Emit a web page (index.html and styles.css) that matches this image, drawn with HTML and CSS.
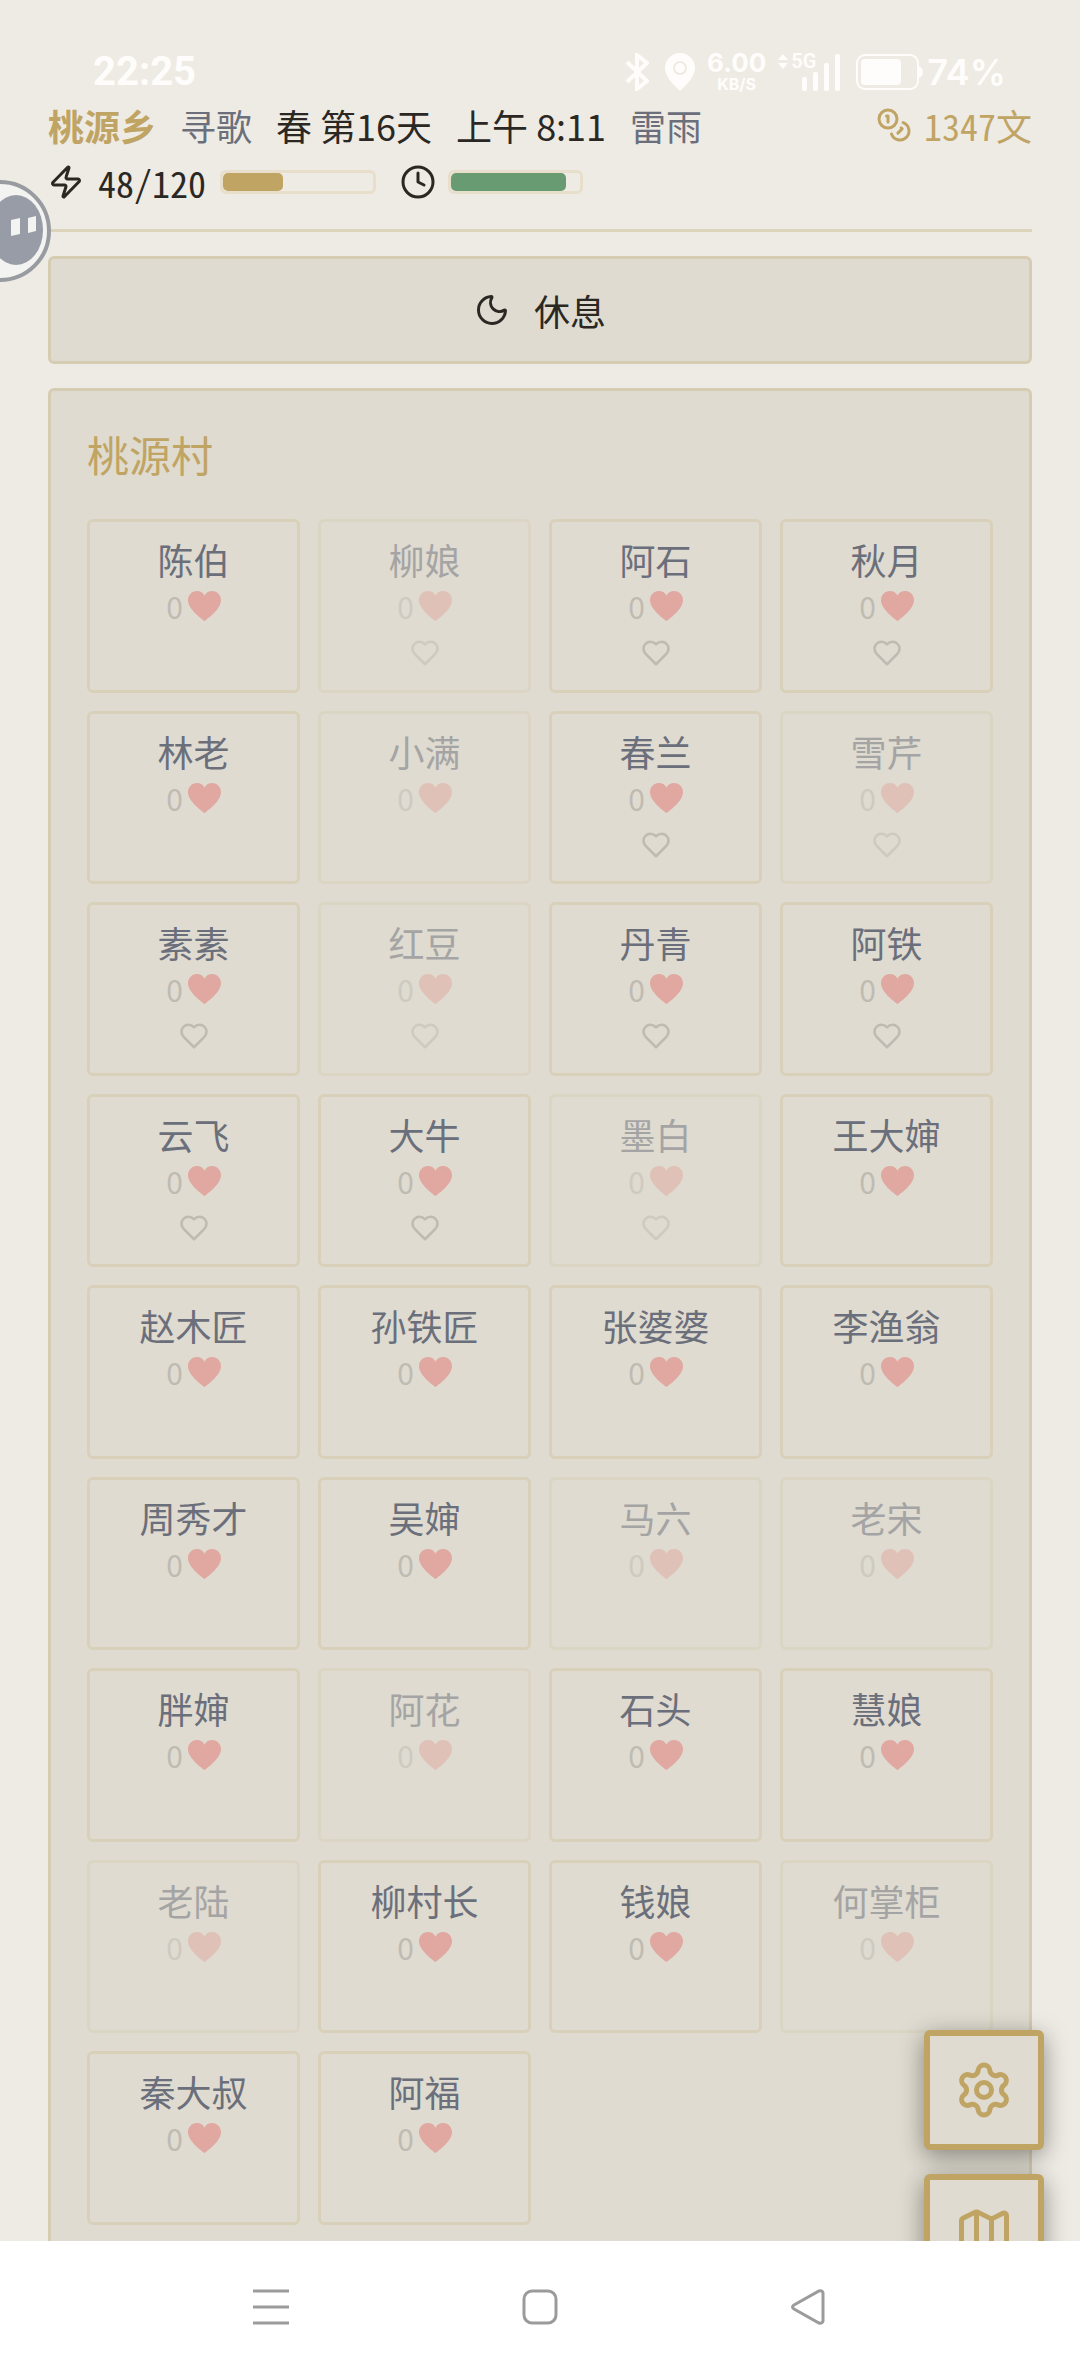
FILE: index.html
```
<!DOCTYPE html>
<html lang="zh-CN">
<head>
  <meta charset="UTF-8" />
  <title>桃源乡</title>
  <meta name="viewport" content="width=device-width, initial-scale=1.0" />
  <link rel="stylesheet" href="styles.css">
</head>
<body>

  <svg class="sprite" aria-hidden="true">
    <symbol id="heart-full" viewBox="0 0 33 30">
      <path d="M16.5 30C15 29 0 18.500 0 9.300C0 4 3.900 0 8.800 0c3.700 0 6.500 2 7.700 4.800C17.700 2 20.500 0 24.200 0 29.100 0 33 4 33 9.300 33 18.500 18 29 16.500 30z"/>
    </symbol>
    <symbol id="heart-line" viewBox="0 0 24 24">
      <path d="M19 14c1.490-1.460 3-3.210 3-5.500A5.500 5.500 0 0 0 16.500 3c-1.760 0-3 .5-4.500 2-1.500-1.500-2.740-2-4.500-2A5.500 5.500 0 0 0 2 8.500c0 2.300 1.500 4.050 3 5.500l7 7z"/>
    </symbol>
  </svg>

  <div class="system-bar">
    <span class="time">22:25</span>
    <div class="system-icons">
      <svg class="bluetooth" viewBox="0 0 24 38"><path d="M2 9l20 19-10 8V2l10 8L2 29"/></svg>
      <svg class="pin" viewBox="0 0 30 38"><path fill-rule="evenodd" d="M15 0a15 15 0 0 1 15 15c0 9-9 17-15 23C9 32 0 24 0 15A15 15 0 0 1 15 0zm0 8a7 7 0 1 0 0 14 7 7 0 0 0 0-14z"/><circle cx="15" cy="15" r="5"/></svg>
      <div class="speed"><b>6.00</b><small>KB/S</small></div>
      <div class="signal">
        <svg viewBox="0 0 62 38"><path d="M0 7l5-6 5 6zM0 10h10l-5 6z"/><rect x="24" y="24" width="5" height="14" rx="2"/><rect x="35" y="19" width="5" height="19" rx="2"/><rect x="46" y="10" width="5" height="28" rx="2"/><rect x="57" y="1" width="5" height="37" rx="2"/></svg>
        <span class="net">5G</span>
      </div>
      <svg class="battery" viewBox="0 0 67 36"><rect class="shell" x="1" y="1" width="61" height="34" rx="8"/><rect x="5" y="5" width="40" height="26" rx="4"/><path d="M63 12q4 2 4 6t-4 6z"/></svg>
      <span class="percent">74%</span>
    </div>
  </div>

  <div class="container">

    <header>
      <div class="status-row">
        <h1>桃源乡</h1>
        <span class="muted">寻歌</span>
        <span>春 第16天</span>
        <span>上午 8:11</span>
        <span class="muted">雷雨</span>
        <span class="money">
          <svg class="icon" viewBox="0 0 24 24"><circle cx="8" cy="8" r="6"/><path d="M18.090 10.370A6 6 0 1 1 10.340 18M7 6h1v4M16.710 13.880l.7.71-2.820 2.820"/></svg>
          <span class="num">1347文</span>
        </span>
      </div>
      <div class="status-row meters">
        <svg class="icon" viewBox="0 0 24 24"><path d="M4 14a1 1 0 0 1-.78-1.630l9.900-10.200a.5.5 0 0 1 .86.460l-1.920 6.020A1 1 0 0 0 13 10h7a1 1 0 0 1 .78 1.630l-9.900 10.200a.5.5 0 0 1-.86-.46l1.920-6.020A1 1 0 0 0 11 14z"/></svg>
        <span class="num">48/120</span>
        <div class="bar bar-energy"><div class="fill" style="width: 40%"></div></div>
        <svg class="icon" viewBox="0 0 24 24"><circle cx="12" cy="12" r="10"/><path d="M12 6v6l4 2"/></svg>
        <div class="bar bar-time"><div class="fill" style="width: 89%"></div></div>
      </div>
    </header>

    <button class="rest">
      <svg class="icon" viewBox="0 0 24 24"><path d="M20.985 12.486a9 9 0 1 1-9.473-9.472c.405-.022.617.46.402.803a6 6 0 0 0 8.268 8.268c.344-.215.825-.004.803.401"/></svg>
      <span>休息</span>
    </button>

    <section class="village">
      <h2>桃源村</h2>
      <div class="people" id="people"></div>
    </section>

  </div>

  <button class="assist" aria-label="悬浮球">
    <svg viewBox="0 0 102 102"><circle class="ring" cx="51" cy="51" r="49"/><ellipse cx="67" cy="50" rx="27" ry="35"/><path class="eye" d="M62 40l9-2v16l-9 2zM79 38l8-2v15l-8 2z"/></svg>
  </button>

  <div class="side-buttons">
    <button aria-label="设置"><svg viewBox="0 0 24 24"><path d="M9.671 4.136a2.340 2.340 0 0 1 4.659 0 2.340 2.340 0 0 0 3.319 1.915 2.340 2.340 0 0 1 2.330 4.033 2.340 2.340 0 0 0 0 3.831 2.340 2.340 0 0 1-2.330 4.033 2.340 2.340 0 0 0-3.319 1.915 2.340 2.340 0 0 1-4.659 0 2.340 2.340 0 0 0-3.320-1.915 2.340 2.340 0 0 1-2.330-4.033 2.340 2.340 0 0 0 0-3.831A2.340 2.340 0 0 1 6.350 6.051a2.340 2.340 0 0 0 3.319-1.915"/><circle cx="12" cy="12" r="3"/></svg></button>
    <button aria-label="地图"><svg viewBox="0 0 24 24"><path d="M14.106 5.553a2 2 0 0 0 1.788 0l3.659-1.830A1 1 0 0 1 21 4.619v12.764a1 1 0 0 1-.553.894l-4.553 2.277a2 2 0 0 1-1.788 0l-4.212-2.106a2 2 0 0 0-1.788 0l-3.659 1.830A1 1 0 0 1 3 19.381V6.618a1 1 0 0 1 .553-.894l4.553-2.277a2 2 0 0 1 1.788 0zM15 5.764v15M9 3.236v15"/></svg></button>
  </div>

  <nav class="nav-bar">
    <button aria-label="菜单"><svg viewBox="0 0 36 36"><path d="M0 2h36M0 18h36M0 34h36"/></svg></button>
    <button aria-label="主页"><svg viewBox="0 0 36 36"><rect x="2" y="2" width="32" height="32" rx="8"/></svg></button>
    <button aria-label="返回"><svg viewBox="0 0 36 36"><path d="M32 4v28q-1 3-4 2L3 20q-3-2 0-4L28 2q3-1 4 2z"/></svg></button>
  </nav>

  <script>
    // away: 当前不在村里, single: 可以结缘
    const people = [
      { name: '陈伯' },
      { name: '柳娘', away: true, single: true },
      { name: '阿石', single: true },
      { name: '秋月', single: true },
      { name: '林老' },
      { name: '小满', away: true },
      { name: '春兰', single: true },
      { name: '雪芹', away: true, single: true },
      { name: '素素', single: true },
      { name: '红豆', away: true, single: true },
      { name: '丹青', single: true },
      { name: '阿铁', single: true },
      { name: '云飞', single: true },
      { name: '大牛', single: true },
      { name: '墨白', away: true, single: true },
      { name: '王大婶' },
      { name: '赵木匠' },
      { name: '孙铁匠' },
      { name: '张婆婆' },
      { name: '李渔翁' },
      { name: '周秀才' },
      { name: '吴婶' },
      { name: '马六', away: true },
      { name: '老宋', away: true },
      { name: '胖婶' },
      { name: '阿花', away: true },
      { name: '石头' },
      { name: '慧娘' },
      { name: '老陆', away: true },
      { name: '柳村长' },
      { name: '钱娘' },
      { name: '何掌柜', away: true },
      { name: '秦大叔' },
      { name: '阿福' }
    ];

    const lista = document.getElementById('people');

    people.forEach(p => {
      const card = document.createElement('button');
      card.className = p.away ? 'person away' : 'person';
      card.innerHTML = `
        <span class="name">${p.name}</span>
        <span class="hearts">0<svg><use href="#heart-full"/></svg></span>
        ${p.single ? '<svg class="single"><use href="#heart-line"/></svg>' : ''}
      `;
      lista.appendChild(card);
    });
  </script>

</body>
</html>
```
FILE: styles.css
```
:root {
  --fundo: #eeebe4;
  --painel: #dfdbd0;
  --ouro: #c0a464;
  --borda: #d6ccb1;
  --borda-clara: #d9d0ba;
  --texto: #2b2824;
  --cinza: #6b6f7b;
  --verde: #689b72;
  --nav: #9b9b9b;
}

* {
  box-sizing: border-box;
}

body {
  margin: 0;
  height: 100vh;
  overflow: hidden;
  background: var(--fundo);
  color: var(--texto);
  font-family: "Noto Sans CJK SC", sans-serif;
  font-size: 36px;
  line-height: 54px;
}

button {
  font: inherit;
  color: inherit;
  margin: 0;
  padding: 0;
  border: none;
  background: none;
  cursor: pointer;
}

svg {
  display: block;
  flex: none;
}

.sprite {
  display: none;
}

/* barra do sistema */
.system-bar {
  display: flex;
  justify-content: space-between;
  align-items: center;
  height: 98px;
  padding: 45px 74px 0 93px;
  color: #fffdfb;
  fill: #fffdfb;
  font-family: Inter, sans-serif;
  font-weight: 600;
  line-height: 36px;
}

.time {
  font-family: Roboto, sans-serif;
  font-size: 40px;
  font-weight: 700;
}

.system-icons {
  display: flex;
  align-items: center;
}

.bluetooth {
  width: 24px;
  height: 38px;
  margin-right: 16px;
  fill: none;
  stroke: #fffdfb;
  stroke-width: 4px;
}

.pin {
  width: 30px;
  height: 38px;
  margin-right: 12px;
}

.speed {
  display: flex;
  flex-direction: column;
  align-items: center;
  margin-right: 12px;
}

.speed b {
  font-size: 26px;
  font-weight: 700;
  line-height: 24px;
}

.speed small {
  font-size: 16px;
  font-weight: 700;
  line-height: 18px;
}

.signal {
  position: relative;
  margin-right: 16px;
}

.signal svg {
  width: 62px;
  height: 38px;
}

.net {
  position: absolute;
  top: 0;
  left: 13px;
  font-family: Roboto, sans-serif;
  font-size: 20px;
  line-height: 16px;
}

.battery {
  width: 67px;
  height: 36px;
  margin-right: 4px;
}

.battery .shell {
  fill: none;
  stroke: #fffdfb;
  stroke-width: 2px;
}

.percent {
  font-size: 36px;
}

/* conteudo */
.container {
  display: flex;
  flex-direction: column;
  gap: 24px;
  padding: 0 48px;
}

header {
  padding-bottom: 20px;
  border-bottom: 3px solid #ddd4bc;
}

.status-row {
  display: flex;
  align-items: center;
  gap: 24px;
  height: 54px;
  white-space: nowrap;
}

.meters {
  gap: 12px;
  margin-top: 3px;
}

.meters .num {
  padding: 0 2px;
}

h1 {
  margin: 0;
  font-size: 36px;
  font-weight: 700;
  color: var(--ouro);
}

.muted {
  color: var(--cinza);
}

.money {
  display: flex;
  align-items: center;
  gap: 12px;
  margin-left: auto;
  color: var(--ouro);
}

.num {
  font-feature-settings: "hwid";
}

.icon {
  width: 36px;
  height: 36px;
  fill: none;
  stroke: currentColor;
  stroke-width: 2px;
  stroke-linecap: round;
  stroke-linejoin: round;
}

.bar {
  height: 24px;
  border: 3px solid #e7dfcb;
  border-radius: 6px;
}

.bar-energy {
  width: 156px;
  margin-right: 12px;
}

.bar-time {
  width: 135px;
}

.fill {
  height: 100%;
  border-radius: 5px;
}

.bar-energy .fill {
  background: var(--ouro);
}

.bar-time .fill {
  background: var(--verde);
}

.rest {
  display: flex;
  justify-content: center;
  align-items: center;
  gap: 24px;
  padding: 24px;
  border: 3px solid var(--borda);
  border-radius: 6px;
  background: var(--painel);
}

.village {
  padding: 36px 36px 60px;
  border: 3px solid var(--borda);
  border-radius: 6px;
  background: var(--painel);
}

h2 {
  margin: 0 0 38px;
  font-size: 42px;
  font-weight: 400;
  line-height: 54px;
  color: var(--ouro);
}

.people {
  display: grid;
  grid-template-columns: repeat(4, 1fr);
  gap: 18px;
}

.person {
  display: flex;
  flex-direction: column;
  align-items: center;
  aspect-ratio: 27 / 22;
  padding-top: 10px;
  border: 3px solid var(--borda-clara);
  border-radius: 6px;
}

.person.away {
  opacity: 0.5;
}

.name {
  color: var(--cinza);
}

.hearts {
  display: flex;
  align-items: center;
  gap: 5px;
  height: 40px;
  font-size: 30px;
  line-height: 30px;
  color: #bfbbb3;
}

.hearts svg {
  width: 33px;
  height: 30px;
  fill: #e0a8a0;
}

.single {
  width: 30px;
  height: 30px;
  margin-top: 12px;
  fill: none;
  stroke: #c0bbb2;
  stroke-width: 2px;
  stroke-linejoin: round;
}

/* bola flutuante */
.assist {
  position: fixed;
  top: 180px;
  left: -51px;
}

.assist svg {
  width: 102px;
  height: 102px;
  fill: #989ca6;
}

.assist .ring {
  fill: #f3f3f1;
  stroke: #989ca0;
  stroke-width: 4px;
}

.assist .eye {
  fill: #f3f3f1;
}

.side-buttons {
  position: fixed;
  right: 36px;
  bottom: 79px;
  display: flex;
  flex-direction: column;
  gap: 24px;
}

.side-buttons button {
  display: flex;
  justify-content: center;
  align-items: center;
  width: 120px;
  height: 120px;
  border: 6px solid var(--ouro);
  border-radius: 6px;
  background: var(--painel);
  box-shadow: 0 6px 24px rgba(0, 0, 0, 0.4);
}

.side-buttons svg {
  width: 60px;
  height: 60px;
  fill: none;
  stroke: var(--ouro);
  stroke-width: 2px;
  stroke-linecap: round;
  stroke-linejoin: round;
}

/* navegacao */
.nav-bar {
  position: fixed;
  left: 0;
  right: 0;
  bottom: 0;
  display: flex;
  justify-content: space-around;
  align-items: center;
  height: 132px;
  padding: 0 136px;
  background: #fff;
}

.nav-bar svg {
  width: 36px;
  height: 36px;
  fill: none;
  stroke: var(--nav);
  stroke-width: 3px;
}
```
